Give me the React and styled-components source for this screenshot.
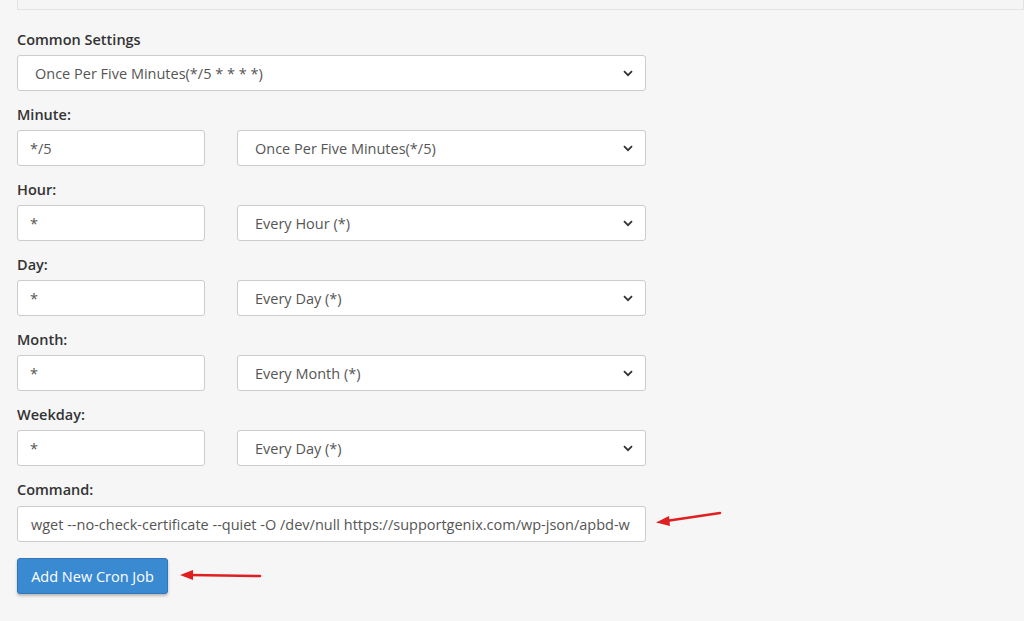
import React from "react";
import styled, { createGlobalStyle } from "styled-components";

const Global = createGlobalStyle`
  html, body { margin: 0; padding: 0; background: #f6f6f6; }
  body { font-family: "Open Sans", "Liberation Sans", sans-serif; color: #333; }
`;

const Page = styled.div`
  position: relative;
  width: 1024px;
  height: 621px;
  overflow: hidden;
  padding-left: 17px;
  box-sizing: border-box;
`;

const TopPanel = styled.div`
  height: 9px;
  border: 1px solid #e3e3e3;
  border-top: none;
  background: #f5f5f5;
  margin-bottom: 21px;
`;

const Form = styled.div`
  display: flex;
  flex-direction: column;
  width: 629px;
`;

const Group = styled.div`
  display: flex;
  flex-direction: column;
  margin-bottom: ${(p) => p.$mb ?? 15}px;
`;

const Label = styled.label`
  font-size: 14.5px;
  font-weight: 600;
  color: #333;
  height: ${(p) => p.$h ?? 22}px;
  line-height: 18px;
  margin-bottom: 2px;
`;

const Row = styled.div`
  display: flex;
  gap: 32px;
`;

const Field = styled.div`
  box-sizing: border-box;
  height: 36px;
  width: ${(p) => p.$w};
  background: #fff;
  border: 1px solid #ccc;
  border-radius: 3px;
  display: flex;
  align-items: center;
  padding: 0 12px 0 ${(p) => p.$pl ?? 12}px;
  font-size: 14.5px;
  color: #555;
  white-space: nowrap;
  overflow: hidden;
`;

const Text = styled.span`
  flex: 1;
  overflow: hidden;
`;

const Button = styled.button`
  width: 151px;
  height: 36px;
  background: #3a8ad2;
  border: 1px solid #2f77b8;
  border-radius: 3px;
  color: #fff;
  font-family: inherit;
  font-size: 14.5px;
  box-shadow: 0 2px 3px rgba(0,0,0,0.25);
  padding: 0;
`;

const Arrow = styled.svg`
  position: absolute;
  left: ${(p) => p.$x}px;
  top: ${(p) => p.$y}px;
`;

const Chevron = () => (
  <svg width="10" height="7" viewBox="0 0 10 7">
    <path d="M1 1.2 L5 5.2 L9 1.2" fill="none" stroke="#333" strokeWidth="1.8" />
  </svg>
);

const Sel = ({ w, children, pl }) => (
  <Field $w={w} $pl={pl}>
    <Text>{children}</Text>
    <Chevron />
  </Field>
);

const rows = [
  ["Minute:", "*/5", "Once Per Five Minutes(*/5)"],
  ["Hour:", "*", "Every Hour (*)"],
  ["Day:", "*", "Every Day (*)"],
  ["Month:", "*", "Every Month (*)"],
  ["Weekday:", "*", "Every Day (*)"],
];

export default function App() {
  return (
    <>
      <Global />
      <Page>
        <TopPanel />
        <Form>
          <Group>
            <Label>Common Settings</Label>
            <Sel w="629px" pl={17}>Once Per Five Minutes(*/5 * * * *)</Sel>
          </Group>
          {rows.map(([l, v, s]) => (
            <Group key={l}>
              <Label>{l}</Label>
              <Row>
                <Field $w="188px" $pl={12}>{v}</Field>
                <Sel w="409px" pl={17}>{s}</Sel>
              </Row>
            </Group>
          ))}
          <Group $mb={16}>
            <Label $h={23}>Command:</Label>
            <Field $w="629px" $pl={13}>
              <Text>wget --no-check-certificate --quiet -O /dev/null https://supportgenix.com/wp-json/apbd-w</Text>
            </Field>
          </Group>
          <div>
            <Button>Add New Cron Job</Button>
          </div>
        </Form>
        <Arrow $x={654} $y={508} width="70" height="20" viewBox="0 0 70 20">
          <line x1="66" y1="5" x2="12" y2="13" stroke="#e02020" strokeWidth="2.5" strokeLinecap="round" />
          <polygon points="2,14.5 15,8 16,18" fill="#e02020" />
        </Arrow>
        <Arrow $x={178} $y={567} width="86" height="16" viewBox="0 0 86 16">
          <line x1="82" y1="9" x2="12" y2="8" stroke="#e02020" strokeWidth="2.5" strokeLinecap="round" />
          <polygon points="2,8 15,3 15,13" fill="#e02020" />
        </Arrow>
      </Page>
    </>
  );
}
